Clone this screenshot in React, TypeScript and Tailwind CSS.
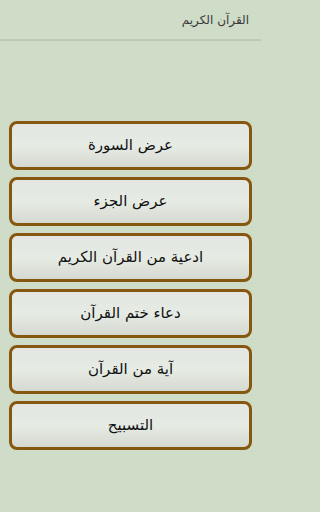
const items = [
  "عرض السورة",
  "عرض الجزء",
  "ادعية من القرآن الكريم",
  "دعاء ختم القرآن",
  "آية من القرآن",
  "التسبيح",
];

const App = () => {
  return (
    <div className="min-h-screen w-full bg-[#cfdcc8]">
      <div className="w-[261px] h-[512px] bg-[#cfdcc8] flex flex-col" dir="rtl" style={{ fontFamily: '"DejaVu Sans", sans-serif' }}>
        <div className="h-[40px] flex items-center px-[12px] border-b border-[#bfcbb8] shadow-[0_1px_1px_rgba(0,0,0,0.08)]">
          <span className="text-[12px] text-[#3a3a3a]">القرآن الكريم</span>
        </div>

        <div className="flex flex-col gap-[7px] px-[9px] pt-[81px]">
          {items.map((t) => (
            <button
              key={t}
              className="h-[49px] w-full flex items-center justify-center rounded-[8px] border-[3px] border-[#86580f] bg-gradient-to-b from-[#e3e6e1] via-[#e6ebe4] to-[#d5d9d2] text-[15px] font-normal text-[#111]"
            >
              {t}
            </button>
          ))}
        </div>
      </div>
    </div>
  );
};

export default App;
